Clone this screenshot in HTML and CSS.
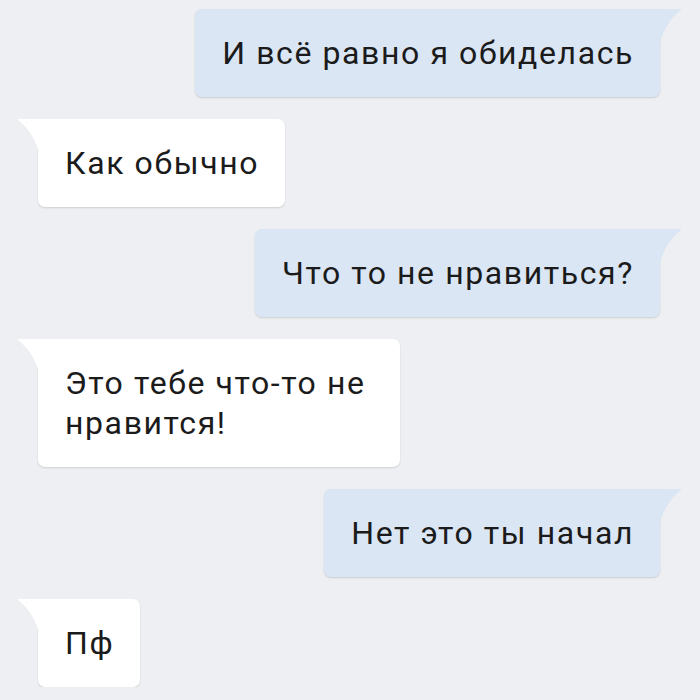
FILE: index.html
```html
<!DOCTYPE html>
<html lang="ru">
<head>
  <meta charset="UTF-8" />
  <meta name="viewport" content="width=device-width, initial-scale=1.0"/>
  <title>Диалог</title>
  <link rel="stylesheet" href="styles.css">
</head>
<body>
  <div class="chat">
    <div class="msg out">И всё равно я обиделась</div>
    <div class="msg in">Как обычно</div>
    <div class="msg out">Что то не нравиться?</div>
    <div class="msg in">Это тебе что-то не нравится!</div>
    <div class="msg out">Нет это ты начал</div>
    <div class="msg in">Пф</div>
  </div>
</body>
</html>
```

FILE: styles.css
```css
body {
  font-family: Roboto, 'Noto Sans', sans-serif;
  background: #edeff2;
  margin: 0;
  padding: 0;
}

.chat {
  display: flex;
  flex-direction: column;
  gap: 22px;
  padding: 9px 40px 0 38px;
}

.msg {
  position: relative;
  box-sizing: border-box;
  padding: 24px 26px 24px 27px;
  font-size: 32px;
  letter-spacing: 1.6px;
  line-height: 40px;
  color: #1b1b1b;
  border-radius: 7px;
  box-shadow: 0 1px 2px rgba(0,0,0,0.14);
}

.msg::before {
  content: '';
  position: absolute;
  top: 0;
  width: 23px;
  height: 40px;
}

.msg.out {
  align-self: flex-end;
  background: #dae6f4;
  border-top-right-radius: 0;
}

.msg.out::before {
  right: -22px;
  background: #dae6f4;
  clip-path: path('M0 0 H23 Q3 16 0 40 Z');
}

.msg.in {
  align-self: flex-start;
  max-width: 362px;
  background: #ffffff;
  border-top-left-radius: 0;
}

.msg.in::before {
  left: -21px;
  background: #ffffff;
  clip-path: path('M0 0 H23 V40 Q20 16 0 0 Z');
}
```
